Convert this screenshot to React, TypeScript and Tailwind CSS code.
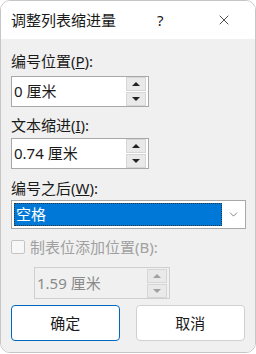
import { X, ChevronDown } from 'lucide-react'

const font = { fontFamily: '"Noto Sans", "Noto Sans CJK SC", sans-serif' }

function Spin({ disabled }: { disabled?: boolean }) {
  const c = disabled ? 'border-b-[#a0a0a0] ' : 'border-b-[#222] '
  return (
    <div className="flex flex-col w-[20px] gap-px mr-[2px]">
      <div className="h-[14px] bg-[#e9e9e9] border border-[#d6d6d6] flex items-center justify-center">
        <div className={'w-0 h-0 border-x-[4px] border-x-transparent border-b-[4px] ' + c} />
      </div>
      <div className="h-[14px] bg-[#e9e9e9] border border-[#d6d6d6] flex items-center justify-center">
        <div className={'w-0 h-0 border-x-[4px] border-x-transparent border-t-[4px] ' + (disabled ? 'border-t-[#a0a0a0]' : 'border-t-[#222]')} />
      </div>
    </div>
  )
}

function SpinBox({ value, disabled, className }: { value: string; disabled?: boolean; className?: string }) {
  return (
    <div className={'flex items-center border ' + (disabled ? 'border-[#cfcfcf] bg-[#f0f0f0] text-[#8a8a8a] ' : 'border-[#a8a8a8] bg-white text-[#1a1a1a] ') + className}>
      <div className="flex-1 pl-[2px] text-[15px] leading-none">{value}</div>
      <Spin disabled={disabled} />
    </div>
  )
}

export default function App() {
  return (
    <div className="w-[256px] h-[354px] bg-white" style={font}>
      <div className="w-[256px] h-[353px] border border-[#c6c6c6] rounded-[10px] overflow-hidden flex flex-col">
        <div className="h-[38px] bg-white flex items-center pl-[10px] text-[15px] text-[#1a1a1a]">
          <span>调整列表缩进量</span>
          <span className="ml-[41px]">?</span>
          <X className="w-[16px] h-[16px] ml-[52px] text-[#333]" strokeWidth={1.3} />
        </div>
        <div className="flex-1 bg-[#f0f0f0] px-[10px] text-[15px] text-[#1a1a1a]">
          <div className="mt-[12px] leading-[20px]">编号位置(<u>P</u>):</div>
          <SpinBox value="0 厘米" className="mt-[5px] w-[138px] h-[31px]" />
          <div className="mt-[8px] leading-[20px]">文本缩进(<u>I</u>):</div>
          <SpinBox value="0.74 厘米" className="mt-[3px] w-[138px] h-[31px]" />
          <div className="mt-[9px] leading-[20px]">编号之后(<u>W</u>):</div>
          <div className="mt-[2px] h-[29px] w-[235px] border border-[#a8a8a8] bg-white flex items-stretch">
            <div className="flex-1 m-[2px] mr-0 bg-[#0078d7] text-white outline outline-1 outline-dotted outline-[#333] -outline-offset-1 pl-[2px] flex items-center">
              空格
            </div>
            <div className="w-[23px] flex items-center justify-center">
              <ChevronDown className="w-[13px] h-[13px] text-[#555]" strokeWidth={1.3} />
            </div>
          </div>
          <div className="mt-[8px] flex items-center text-[#a0a0a0]">
            <div className="w-[14px] h-[14px] border border-[#c4c4c4] bg-[#f7f7f7] rounded-[2px]" />
            <span className="ml-[5px] leading-[20px]">制表位添加位置(B):</span>
          </div>
          <SpinBox value="1.59 厘米" disabled className="mt-[10px] ml-[23px] w-[136px] h-[32px]" />
          <div className="mt-[6px] flex gap-[16px]">
            <div className="w-[109px] h-[36px] rounded-[4px] border-[1.5px] border-[#0067c0] bg-white flex items-center justify-center">确定</div>
            <div className="w-[110px] h-[36px] rounded-[4px] border border-[#d0d0d0] bg-white flex items-center justify-center">取消</div>
          </div>
        </div>
      </div>
    </div>
  )
}
